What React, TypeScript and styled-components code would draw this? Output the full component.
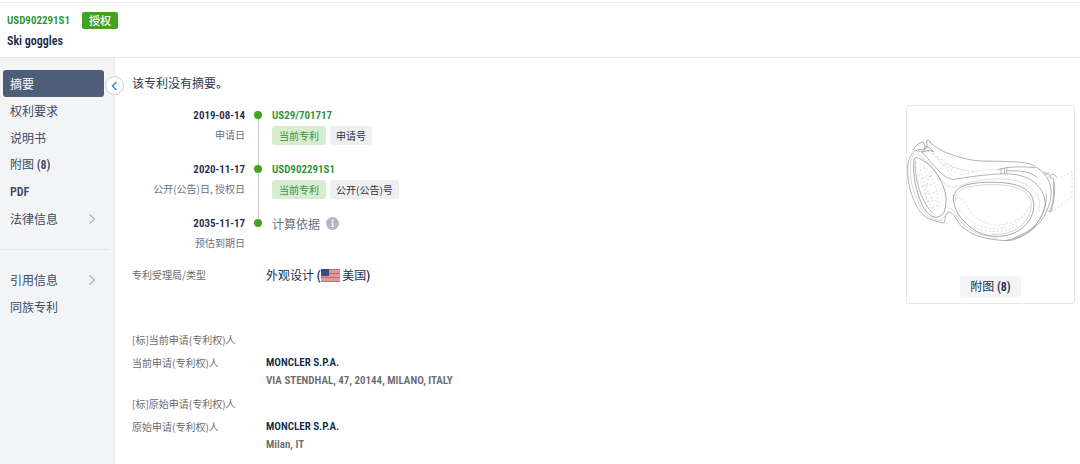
import React from 'react';
import styled, { createGlobalStyle, css } from 'styled-components';

const GlobalStyle = createGlobalStyle`
  *, *::before, *::after { box-sizing: border-box; }
  body {
    margin: 0;
    background: #ffffff;
    color: #2c3b55;
    font-family: "Noto Sans CJK SC", sans-serif;
    font-size: 12px;
    line-height: 18px;
  }
  a { text-decoration: none; color: inherit; }
  button { font: inherit; color: inherit; border: 0; cursor: pointer; }
  h1, p, dl, dt, dd, ul, ol { margin: 0; padding: 0; }
  ul, ol { list-style: none; }
`;

const latin = css`
  font-family: "Roboto Condensed", Roboto, "Noto Sans CJK SC", sans-serif;
  font-weight: 600;
  font-size: 11px;
`;

const Latin = styled.span`
  ${latin}
  font-size: 12px;
`;

const Page = styled.div`
  display: flex;
  flex-direction: column;
  min-height: 100vh;
`;

const Header = styled.header`
  display: flex;
  flex-direction: column;
  gap: 2px;
  margin-top: 2px;
  padding: 8px 7px 7px;
  border-top: 1px solid #eceef0;
  border-bottom: 1px solid #e4e6e9;
`;

const HeaderLine = styled.div`
  display: flex;
  align-items: center;
  gap: 12px;
  height: 19px;
`;

const PatentNumber = styled.a`
  ${latin}
  color: #27912f;
`;

const StatusTag = styled.span`
  padding: 0 7px;
  border-radius: 2px;
  background: #41a31f;
  color: #ffffff;
  font-size: 11px;
  font-weight: 500;
  line-height: 17px;
`;

const Title = styled.h1`
  ${latin}
  font-size: 12px;
  color: #1a2a4a;
  line-height: 18px;
`;

const Body = styled.div`
  display: flex;
  flex: 1;
`;

const Sidebar = styled.nav`
  position: relative;
  flex: none;
  width: 115px;
  padding: 12px 3px 0;
  background: #f3f4f6;
  border-right: 1px solid #e9ebee;
`;

const NavGroup = styled.ul`
  & + & {
    margin: 17px 1px 0 -3px;
    padding: 16px 0 0 3px;
    border-top: 1px solid #e3e6ea;
  }
`;

const NavLink = styled.a<{ $active?: boolean }>`
  display: flex;
  align-items: center;
  justify-content: space-between;
  width: 101px;
  height: 27px;
  padding: 0 8px 0 7px;
  border-radius: 3px;
  color: ${(p) => (p.$active ? '#ffffff' : '#3c4a63')};
  background: ${(p) => (p.$active ? '#4e5d78' : 'transparent')};
`;

const CollapseButton = styled.button`
  position: absolute;
  top: 18px;
  right: -10px;
  display: flex;
  align-items: center;
  justify-content: center;
  width: 19px;
  height: 19px;
  padding: 0;
  border: 1px solid #c9cfda;
  border-radius: 50%;
  background: #ffffff;
  color: #2f86dd;
`;

const Main = styled.main`
  display: flex;
  flex: 1;
  gap: 16px;
  min-width: 0;
  padding: 16px 5px 8px 17px;
`;

const Details = styled.div`
  flex: 1;
  min-width: 0;
`;

const Timeline = styled.ol`
  margin-top: 14px;
`;

const Event = styled.li`
  position: relative;
  display: grid;
  grid-template-columns: 113px 1fr;
  column-gap: 27px;
  height: 54px;

  &::before {
    content: '';
    position: absolute;
    top: 5px;
    left: 122px;
    width: 8px;
    height: 8px;
    border-radius: 50%;
    background: #41a31f;
  }

  &:not(:last-child)::after {
    content: '';
    position: absolute;
    top: 13px;
    left: 126px;
    width: 1px;
    height: 46px;
    background: #c4c8d0;
  }
`;

const EventDate = styled.div`
  text-align: right;
`;

const DateText = styled.time`
  ${latin}
  display: block;
  color: #1a2a4a;
  line-height: 20px;
`;

const Caption = styled.span`
  display: block;
  color: #68727f;
  font-size: 10px;
  line-height: 18px;
`;

const EventInfo = styled.div`
  line-height: 19px;
`;

const EventLink = styled.a`
  ${latin}
  display: block;
  color: #27912f;
  line-height: 20px;
`;

const Tags = styled.div`
  display: flex;
  gap: 4px;
`;

const Tag = styled.span<{ $current?: boolean }>`
  padding: 0 ${(p) => (p.$current ? 7 : 6)}px;
  border-radius: 3px;
  font-size: 10px;
  line-height: 19px;
  color: ${(p) => (p.$current ? '#3f9142' : '#2c3648')};
  background: ${(p) => (p.$current ? '#d8ecd0' : '#eeeff1')};
`;

const Basis = styled.span`
  display: flex;
  align-items: center;
  gap: 6px;
  color: #68727f;
`;

const Fields = styled.dl`
  display: grid;
  grid-template-columns: 134px 1fr;
  margin-top: -2px;
`;

const Term = styled.dt`
  color: #6b6b6b;
  font-size: 10px;
  line-height: 18px;
`;

const Value = styled.dd`
  color: #22304a;
`;

const Owners = styled.dl`
  display: grid;
  grid-template-columns: 134px 1fr;
  row-gap: 5px;
  margin-top: 46px;
`;

const OwnerHeading = styled(Term)`
  grid-column: 1 / -1;
`;

const OwnerName = styled.a`
  ${latin}
  display: block;
  color: #12284f;
  line-height: 18px;
`;

const Address = styled.span`
  ${latin}
  display: block;
  color: #6b6b6b;
  line-height: 18px;
`;

const Flag = styled.svg`
  width: 19px;
  height: 13px;
  vertical-align: -2px;
`;

const Figure = styled.aside`
  flex: none;
  align-self: flex-start;
  display: flex;
  flex-direction: column;
  align-items: center;
  width: 169px;
  margin-top: 31px;
  padding-bottom: 6px;
  border: 1px solid #e6e7ea;
  border-radius: 3px;
`;

const FigureDrawing = styled.svg`
  display: block;
  width: 100%;
`;

const FigureButton = styled.button`
  padding: 0 10px;
  border-radius: 3px;
  background: #f3f4f6;
  color: #22304a;
  line-height: 20px;
`;

const Chevron = () => (
  <svg width="8" height="12" viewBox="0 0 8 12" fill="none" stroke="#a9b2c3" strokeWidth="1.3" aria-hidden="true">
    <path d="M1.5 1.5 6.5 6l-5 4.5" />
  </svg>
);

const InfoIcon = () => (
  <svg width="13" height="13" viewBox="0 0 13 13" aria-hidden="true">
    <circle cx="6.5" cy="6.5" r="6.5" fill="#b1b8c5" />
    <circle cx="6.5" cy="3.6" r="1" fill="#fff" />
    <path d="M5.2 6h1.6V9.4M5 9.5h3.2" stroke="#fff" strokeWidth="1.2" fill="none" />
  </svg>
);

const UsFlag = () => (
  <Flag viewBox="0 0 19 13" role="img" aria-label="US">
    <rect width="19" height="13" fill="#dd9aa2" />
    {[0, 4, 8, 12].map((y) => (
      <rect key={y} y={y} width="19" height="1" fill="#cb6472" />
    ))}
    <rect width="8" height="7" fill="#3a4a7c" />
  </Flag>
);

type Point = [number, number];

/* Smooth (Catmull-Rom) curve through the given points. */
const curve = (pts: Point[], closed = false) => {
  const n = pts.length;
  const at = (i: number) => (closed ? pts[(i + n) % n] : pts[Math.max(0, Math.min(n - 1, i))]);
  let d = `M${pts[0][0]} ${pts[0][1]}`;
  for (let i = 0; i < (closed ? n : n - 1); i++) {
    const [a, b, c, e] = [at(i - 1), at(i), at(i + 1), at(i + 2)];
    d += `C${b[0] + (c[0] - a[0]) / 6} ${b[1] + (c[1] - a[1]) / 6} ${c[0] - (e[0] - b[0]) / 6} ${c[1] - (e[1] - b[1]) / 6} ${c[0]} ${c[1]}`;
  }
  return d;
};

const leftLens: Point[] = [[42, 190], [60, 190], [95, 215], [122, 256], [137, 300], [134, 344], [120, 362], [98, 364], [72, 340], [52, 292], [41, 236]];
const rightLens: Point[] = [[161, 300], [182, 275], [225, 263], [280, 260], [340, 266], [384, 286], [402, 320], [396, 362], [366, 400], [322, 420], [274, 422], [222, 404], [180, 364], [163, 328]];
const rightLensInner: Point[] = [[166, 318], [172, 294], [200, 276], [270, 267], [336, 273], [376, 290], [394, 320], [389, 358], [360, 395], [318, 414], [276, 417]];
const rim: Point[] = [[66, 170], [46, 165], [30, 182], [22, 214], [25, 262], [37, 305], [57, 345], [84, 369], [124, 382], [133, 380], [137, 360], [148, 351], [163, 362], [186, 394], [230, 421], [290, 434], [340, 434], [392, 408], [432, 366], [452, 316], [454, 278], [440, 242], [408, 213], [370, 201], [300, 197], [230, 195], [170, 182], [120, 162], [88, 139]];
const rimInner: Point[] = [[40, 176], [31, 204], [33, 258], [48, 308], [70, 348], [98, 370], [124, 374], [142, 350], [154, 340], [170, 362], [196, 392], [236, 416], [290, 428]];
const brow: Point[] = [[66, 170], [98, 206], [132, 240], [158, 251], [190, 247], [250, 239], [312, 235], [362, 240], [404, 260], [430, 294], [436, 330], [420, 372], [390, 404], [340, 430]];
const browShade: Point[] = [[50, 172], [88, 206], [118, 246], [142, 270], [166, 274], [220, 258], [290, 250], [350, 256], [396, 278], [418, 310], [418, 346]];

const Goggles = () => (
  <FigureDrawing viewBox="20 30 504 513" fill="none" stroke="#a6a6a6" strokeWidth="2.6" strokeLinecap="round" role="img" aria-label="Ski goggles">
    <path d={curve(rim)} />
    <path d={curve(rimInner)} stroke="#d4d4d4" />
    <path d={curve(brow)} />
    <path d={curve(browShade)} stroke="#d8d8d8" />
    <path d={curve(leftLens, true)} stroke="#999999" />
    <path d="M46 196c-4 28 4 66 16 100 10 24 20 42 34 56" />
    <path d={curve(rightLens, true)} stroke="#999999" />
    <path d={curve(rightLensInner)} stroke="#cfcfcf" />
    <path d="M316 436c48-6 84-28 106-66 14-26 20-50 18-74" />
    {/* strap mount on the far side */}
    <path d="M39 163c4-12 16-22 30-24l6 14-4 10-16-2M80 134c-2 6 2 12 0 20l-8 8M82 132c4-2 6 4 10 10M76 152l12 4 8 8M66 168l22-4 12 4" stroke="#999999" />
    {/* vent slot and near strap mount */}
    <path d="M296 222l24-6c28-3 56-3 86 0M304 217v18M314 218v17M321 218v16M322 226c40-2 70 2 92 20" />
    <path d="M432 230c12 2 18 8 24 18M438 236l10-4M450 242c4-6 10-8 16-4l6 8M454 246c10-2 10 12 8 28 2 30-2 54-12 74M464 260c4 26 0 58-8 84M460 344c-4 6-10 8-14 2" />
    {/* hidden inner surfaces and strap */}
    <g stroke="#c8c8c8" strokeWidth="2" strokeDasharray="4 8">
      <path d="M84 166c30 24 50 50 74 76M100 172c20 30 44 48 72 60M112 182c30 26 58 38 92 44M136 204c30 20 60 24 94 22M180 238c42-8 78-20 112-16" />
      <path d="M58 206c12 4 26 14 34 30M60 222c8 28 20 54 18 86M70 216l14 34-4 30 16 32M64 250l28-8M66 272l32-6M74 296l30-6M82 318l34-4M92 238c14 28 24 64 22 96M86 338l36-12M56 236c8 36 22 76 42 108" />
      <path d="M174 306c26 10 32 42 54 60 30 24 70 30 106 16 26-10 44-26 56-48M178 344c24 32 56 52 98 56 40 2 78-12 100-42M200 386c40 26 100 32 154 6" />
      <path d="M484 248l34-20v64M518 292l-4 16-52 38" />
    </g>
  </FigureDrawing>
);

const NavItem = ({ children, active, expandable }: { children: React.ReactNode; active?: boolean; expandable?: boolean }) => (
  <li>
    <NavLink href="#" $active={active} aria-current={active ? 'page' : undefined}>
      <span>{children}</span>
      {expandable && <Chevron />}
    </NavLink>
  </li>
);

export default function App() {
  return (
    <Page>
      <GlobalStyle />
      <Header>
        <HeaderLine>
          <PatentNumber href="#">USD902291S1</PatentNumber>
          <StatusTag>授权</StatusTag>
        </HeaderLine>
        <Title>Ski goggles</Title>
      </Header>
      <Body>
        <Sidebar>
          <NavGroup>
            <NavItem active>摘要</NavItem>
            <NavItem>权利要求</NavItem>
            <NavItem>说明书</NavItem>
            <NavItem>附图 <Latin>(8)</Latin></NavItem>
            <NavItem><Latin>PDF</Latin></NavItem>
            <NavItem expandable>法律信息</NavItem>
          </NavGroup>
          <NavGroup>
            <NavItem expandable>引用信息</NavItem>
            <NavItem>同族专利</NavItem>
          </NavGroup>
          <CollapseButton aria-label="收起">
            <svg width="7" height="10" viewBox="0 0 7 10" fill="none" stroke="currentColor" strokeWidth="1.5">
              <path d="M5.5 1 1.5 5l4 4" />
            </svg>
          </CollapseButton>
        </Sidebar>
        <Main>
          <Details>
            <p>该专利没有摘要。</p>
            <Timeline>
              <Event>
                <EventDate>
                  <DateText>2019-08-14</DateText>
                  <Caption>申请日</Caption>
                </EventDate>
                <EventInfo>
                  <EventLink href="#">US29/701717</EventLink>
                  <Tags><Tag $current>当前专利</Tag><Tag>申请号</Tag></Tags>
                </EventInfo>
              </Event>
              <Event>
                <EventDate>
                  <DateText>2020-11-17</DateText>
                  <Caption>公开(公告)日, 授权日</Caption>
                </EventDate>
                <EventInfo>
                  <EventLink href="#">USD902291S1</EventLink>
                  <Tags><Tag $current>当前专利</Tag><Tag>公开(公告)号</Tag></Tags>
                </EventInfo>
              </Event>
              <Event>
                <EventDate>
                  <DateText>2035-11-17</DateText>
                  <Caption>预估到期日</Caption>
                </EventDate>
                <EventInfo>
                  <Basis>计算依据 <InfoIcon /></Basis>
                </EventInfo>
              </Event>
            </Timeline>
            <Fields>
              <Term>专利受理局/类型</Term>
              <Value>外观设计 <Latin>(</Latin><UsFlag /> 美国<Latin>)</Latin></Value>
            </Fields>
            <Owners>
              <OwnerHeading>[标]当前申请(专利权)人</OwnerHeading>
              <Term>当前申请(专利权)人</Term>
              <Value>
                <OwnerName href="#">MONCLER S.P.A.</OwnerName>
                <Address>VIA STENDHAL, 47, 20144, MILANO, ITALY</Address>
              </Value>
              <OwnerHeading>[标]原始申请(专利权)人</OwnerHeading>
              <Term>原始申请(专利权)人</Term>
              <Value>
                <OwnerName href="#">MONCLER S.P.A.</OwnerName>
                <Address>Milan, IT</Address>
              </Value>
            </Owners>
          </Details>
          <Figure>
            <Goggles />
            <FigureButton>附图 <Latin>(8)</Latin></FigureButton>
          </Figure>
        </Main>
      </Body>
    </Page>
  );
}
